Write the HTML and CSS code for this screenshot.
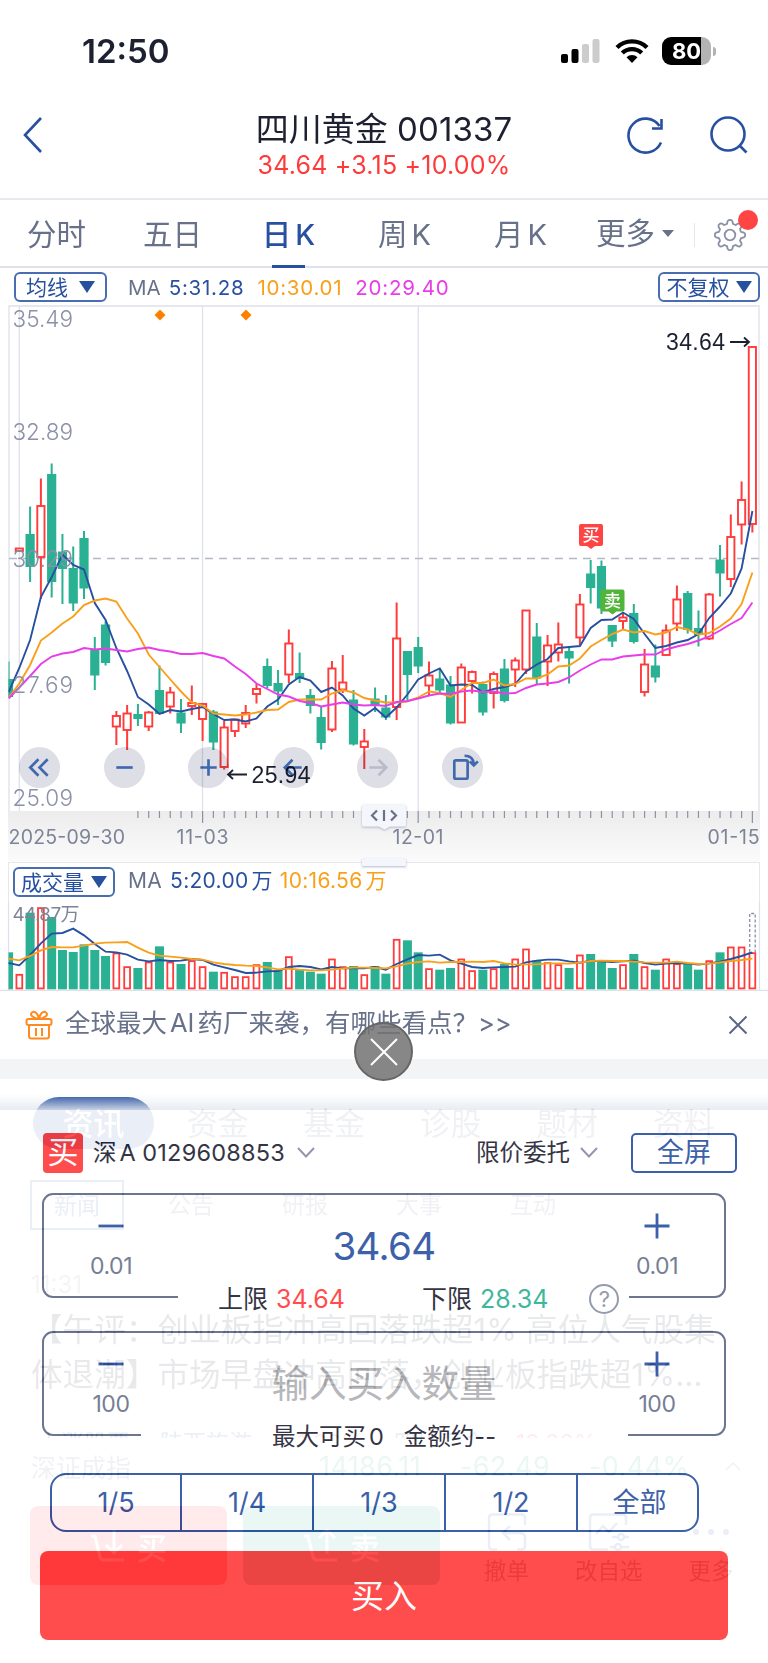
FILE: index.html
```
<!DOCTYPE html>
<html lang="zh-CN">
<head>
    <meta charset="UTF-8">
    <meta name="viewport" content="width=device-width, initial-scale=1.0">
    <title>四川黄金 001337</title>
    <link rel="stylesheet" href="styles.css">
</head>
<body>
<div class="phone">
    <div class="status-bar">
        <span class="clock">12:50</span>
        <svg class="signal" width="39" height="24" viewBox="0 0 39 24">
            <rect x="0" y="15" width="7" height="9" rx="2"/>
            <rect x="10.5" y="10" width="7" height="14" rx="2"/>
            <rect x="21" y="5" width="7" height="19" rx="2" fill="#ccc"/>
            <rect x="31.5" y="0" width="7" height="24" rx="2" fill="#ccc"/>
        </svg>
        <svg class="wifi" width="34" height="24" viewBox="0 0 34 24">
            <path d="M2 8.5a21.5 21.5 0 0 1 30 0M7.3 14a14 14 0 0 1 19.4 0" fill="none" stroke="#000" stroke-width="4.4"/>
            <path d="M17 24l-5.5-5.8a8 8 0 0 1 11 0z"/>
        </svg>
        <div class="battery"><span>80</span></div>
        <i class="battery-tip"></i>
    </div>

    <header class="title-bar">
        <svg class="back" width="22" height="38" viewBox="0 0 22 38"><path d="M19 2L3 19l16 17"/></svg>
        <div class="title">
            <h1>四川黄金 <span>001337</span></h1>
            <p>34.64 +3.15 +10.00%</p>
        </div>
        <svg class="refresh" width="38" height="38" viewBox="0 0 38 38"><path d="M35 26.5A17 17 0 1 1 33.500 10M26 12.500h9.500V3"/></svg>
        <svg class="search" width="40" height="38" viewBox="0 0 40 38"><circle cx="19" cy="18" r="16.500"/><path d="M30 29l7.500 7.500"/></svg>
    </header>

    <nav class="period-tabs">
        <a>分时</a>
        <a>五日</a>
        <a class="active">日<b>K</b></a>
        <a>周<b>K</b></a>
        <a>月<b>K</b></a>
        <a class="more">更多<i></i></a>
        <span class="gear">
            <svg width="34" height="34" viewBox="0 0 34 34">
                <path id="gearPath" d=""/>
                <circle cx="17" cy="17" r="5.300"/>
            </svg>
        </span>
    </nav>

    <div class="indicator">
        <span class="chip">均线<i></i></span>
        <span class="ma gray">MA</span>
        <span class="ma blue ma5">5:31.28</span>
        <span class="ma orange ma10">10:30.01</span>
        <span class="ma pink">20:29.40</span>
        <span class="chip right">不复权<i></i></span>
    </div>

    <section class="kline">
        <svg id="kChart" width="768" height="557" viewBox="0 305 768 557"></svg>
        <div class="controls">
            <span><svg viewBox="0 0 40 40"><path d="M19 12l-8 8 8 8M28 12l-8 8 8 8"/></svg></span>
            <span><svg viewBox="0 0 40 40"><path d="M12 20h16"/></svg></span>
            <span><svg viewBox="0 0 40 40"><path d="M12 20h16M20 12v16"/></svg></span>
            <span><svg viewBox="0 0 40 40"><path d="M28 20H12M19 12.500l-7.500 7.500 7.500 7.500"/></svg></span>
            <span class="off"><svg viewBox="0 0 40 40"><path d="M12 20h16M21 12.500l7.500 7.500-7.500 7.500"/></svg></span>
            <span><svg viewBox="0 0 40 40"><rect x="12" y="13" width="13" height="18" rx="1.500"/><path d="M22 8.500c6 0 9 3 9 9M27 14l4 4 4-4"/></svg></span>
        </div>
    </section>

    <section class="volume">
        <div class="volume-head">
            <span class="chip">成交量<i></i></span>
            <span class="ma gray">MA</span>
            <span class="ma blue">5:20.00<em>万</em></span>
            <span class="ma orange">10:16.56<em>万</em></span>
        </div>
        <svg id="vChart" width="768" height="89" viewBox="0 902 768 89"></svg>
    </section>

    <div class="notice">
        <svg width="28" height="30" viewBox="0 0 28 30">
            <rect x="1.500" y="9" width="25" height="6" rx="2"/>
            <path d="M4 15v11q0 2.500 2.500 2.500h15q2.500 0 2.500-2.500V15M11 18v8M17 18v8M14 9C8 8 4 5 7 2.500S13 4 14 9C15 4 18 0 21 2.500S20 8 14 9"/>
        </svg>
        <span>全球最大<em>AI</em>药厂来袭，有哪些看点？<b>&gt;&gt;</b></span>
        <svg class="dismiss" width="20" height="20" viewBox="0 0 20 20"><path d="M1.500 1.500l17 17M18.500 1.500l-17 17"/></svg>
    </div>

    <div class="news">
        <div class="news-tabs">
            <a class="active">资讯</a><a>资金</a><a>基金</a><a>诊股</a><a>题材</a><a>资料</a>
        </div>
        <div class="sub-tabs">
            <a class="active">新闻</a><a>公告</a><a>研报</a><a>大事</a><a>互动</a>
        </div>
        <time>11:31</time>
        <h2><span>【午评：创业板指冲高回落跌超1% 高位人气股集</span><span>体退潮】市场早盘冲高回落，创业板指跌超1%…</span></h2>
        <div class="related"><span>上涨股票</span><span>陕西旅游</span><span class="up">+1.68%</span><span>四川黄金</span><span class="up">10.00%</span></div>
    </div>

    <div class="index-row">
        <span>深证成指</span><b class="v1">14186.11</b><b class="v2">-62.49</b><b class="v3">-0.44%</b>
        <svg width="16" height="10" viewBox="0 0 16 10"><path d="M1 9l7-7 7 7"/></svg>
    </div>

    <div class="bottom-bar">
        <div class="trade buy">
            <svg width="38" height="34" viewBox="0 0 38 34"><path d="M1 7h4l5 21q1 3 4 3h20M24 1v22M16 16l8 8 8-8"/></svg>买
        </div>
        <div class="trade sell">
            <svg width="38" height="34" viewBox="0 0 38 34"><path d="M1 7h4l5 21q1 3 4 3h20M24 25V2M16 9l8-8 8 8"/></svg>卖
        </div>
        <div class="tool t1">
            <svg width="40" height="38" viewBox="0 0 40 38"><path d="M38 12V5q0-3.500-3.500-3.500h-29Q2 1.500 2 5v28q0 3.500 3.500 3.500H10M30 36.500h4.500Q38 36.500 38 33v-8q0-5-5-5H16M23 13l-7 7 7 7"/></svg>撤单
        </div>
        <div class="tool t2">
            <svg width="42" height="38" viewBox="0 0 42 38"><path d="M38 12V5q0-3.500-3.500-3.500h-29Q2 1.500 2 5v28q0 3.500 3.500 3.500H20M8 21l7-8 6 6 8-9M24 24h6M36 24h5M22 34h5M34 34h7"/><circle cx="33" cy="24" r="3"/><circle cx="30" cy="34" r="3"/></svg>改自选
        </div>
        <div class="tool t3">
            <svg width="40" height="38" viewBox="0 0 40 38"><g class="dots"><circle cx="5" cy="19" r="3"/><circle cx="20" cy="19" r="3"/><circle cx="35" cy="19" r="3"/></g></svg>更多
        </div>
    </div>

    <!-- quick order sheet, lies over the page -->
    <div class="sheet-fade"></div>
    <div class="sheet-close"><svg width="28" height="28" viewBox="0 0 28 28"><path d="M1 1l26 26M27 1L1 27"/></svg></div>
    <div class="sheet">
        <div class="account">
            <span class="side">买</span>
            <span class="acc">深<em>A</em> <b>0129608853</b></span>
            <svg width="18" height="11" viewBox="0 0 18 11"><path d="M1 1l8 8.500L17 1"/></svg>
            <span class="kind">限价委托</span>
            <svg width="18" height="11" viewBox="0 0 18 11"><path d="M1 1l8 8.500L17 1"/></svg>
            <span class="full">全屏</span>
        </div>
        <div class="field price">
            <div class="step"><svg width="26" height="26" viewBox="0 0 26 26"><path d="M.5 13h25"/></svg>0.01</div>
            <div class="value">34.64</div>
            <div class="step"><svg width="26" height="26" viewBox="0 0 26 26"><path d="M.5 13h25M13 .5v25"/></svg>0.01</div>
            <div class="legend">
                <span>上限 <b class="up">34.64</b></span>
                <span class="low">下限 <b class="down">28.34</b></span>
                <i>?</i>
            </div>
        </div>
        <div class="field amount">
            <div class="step"><svg width="26" height="26" viewBox="0 0 26 26"><path d="M.5 13h25"/></svg>100</div>
            <div class="value placeholder">输入买入数量</div>
            <div class="step"><svg width="26" height="26" viewBox="0 0 26 26"><path d="M.5 13h25M13 .5v25"/></svg>100</div>
            <div class="legend"><span>最大可买<b>0</b></span><span class="sum">金额约--</span></div>
        </div>
        <div class="parts"><span>1/5</span><span>1/4</span><span>1/3</span><span>1/2</span><span>全部</span></div>
        <div class="submit">买入</div>
    </div>
</div>
<script src="script.js"></script>
</body>
</html>
```
FILE: styles.css
```
* {
    box-sizing: border-box;
}
body {
    margin: 0;
    background: #fff;
    font-family: Inter, "Noto Sans CJK SC", sans-serif;
    color: #1c2030;
}
h1, h2, p {
    margin: 0;
    font-weight: 400;
}
b, em, i {
    font-weight: inherit;
    font-style: normal;
}
svg {
    display: block;
    flex: none;
}
.phone {
    position: relative;
    width: 768px;
    height: 1663px;
    overflow: hidden;
    white-space: nowrap;
}
.gray { color: #68718a; }
.blue { color: #2850a0; }
.orange { color: #f9a01b; }
.pink { color: #e83de8; }
.up { color: #ff3a3a; }
.down { color: #2ab092; }

/* status bar */
.status-bar {
    display: flex;
    align-items: center;
    height: 102px;
    padding-left: 82px;
}
.clock {
    width: 479px;
    font-size: 33px;
    font-weight: 600;
}
.wifi {
    margin: 0 13px 0 15px;
}
.battery {
    width: 49px;
    height: 28px;
    border-radius: 9px;
    background: linear-gradient(90deg, #000 80%, #b3b3b3 80%);
    color: #fff;
    font-size: 22px;
    font-weight: 700;
    line-height: 28px;
    text-align: center;
}
.battery-tip {
    width: 3px;
    height: 9px;
    margin-left: 2px;
    border-radius: 0 3px 3px 0;
    background: #b3b3b3;
}

/* header */
.title-bar {
    display: flex;
    height: 98px;
    border-bottom: 2px solid #e8e9ee;
}
.title-bar svg {
    margin-top: 14px;
    fill: none;
    stroke: #2850a0;
    stroke-width: 2.6;
}
.title-bar .back {
    margin-left: 22px;
}
.title {
    width: 400px;
    margin-left: 140px;
    text-align: center;
}
.title h1 {
    height: 49px;
    font-size: 33px;
    line-height: 54px;
}
.title h1 span {
    letter-spacing: 0.1px;
}
.title p {
    font-size: 25px;
    line-height: 28px;
    color: #ff3a3a;
    letter-spacing: 0.2px;
}
.title-bar .refresh {
    margin-left: 42px;
}
.title-bar .search {
    margin-left: 45px;
}

/* period tabs */
.period-tabs {
    display: grid;
    grid-template-columns: repeat(5, 116px) 114px 74px;
    height: 68px;
    border-bottom: 2px solid #dfe2ea;
    font-size: 29.500px;
    line-height: 69px;
    color: #68718a;
    text-align: center;
}
.period-tabs a {
    padding-right: 3px;
}
.period-tabs a b {
    margin-left: 4px;
    font-size: 29px;
}
.period-tabs .active {
    position: relative;
    color: #2850a0;
    font-weight: 500;
}
.period-tabs .active::after {
    content: "";
    position: absolute;
    left: 40px;
    bottom: 1px;
    width: 33px;
    height: 3px;
    background: #2850a0;
}
.period-tabs .more {
    display: flex;
    align-items: center;
    padding-left: 16px;
    height: 67px;
}
.more i {
    margin-left: 7px;
    border: 6px solid transparent;
    border-top: 7px solid #68718a;
    border-bottom: 0;
}
.gear {
    position: relative;
    align-self: center;
    height: 24px;
    border-left: 1px solid #e4e6ec;
}
.gear svg {
    margin: -5px 0 0 18px;
    fill: none;
    stroke: #8a91a6;
    stroke-width: 1.8;
}
.gear::after {
    content: "";
    position: absolute;
    left: 43px;
    top: -13px;
    width: 20px;
    height: 20px;
    border-radius: 50%;
    background: #ff4444;
}

/* MA legend */
.indicator {
    display: flex;
    align-items: center;
    height: 37px;
    padding: 1px 8px 0 14px;
}
.chip {
    display: flex;
    align-items: center;
    justify-content: center;
    height: 30px;
    width: 93px;
    padding-bottom: 2px;
    border: 2px solid #4a6cb0;
    border-radius: 6px;
    color: #2850a0;
    font-size: 21px;
}
.chip i {
    margin: 2px 0 0 11px;
    border: 8px solid transparent;
    border-top: 12px solid #2850a0;
    border-bottom: 0;
}
.chip.right {
    width: 102px;
    margin-left: auto;
}
.chip.right i {
    margin-left: 6px;
}
.ma {
    margin-left: 13px;
    font-size: 20.500px;
    letter-spacing: 0.75px;
}
.ma.gray {
    letter-spacing: 0;
}
.indicator .chip + .ma {
    margin-left: 21px;
}
.gray + .blue {
    margin-left: 8px;
}

/* k line */
.kline {
    position: relative;
    height: 557px;
}
.kline > svg {
    overflow: visible;
}
.controls {
    position: absolute;
    left: 19px;
    top: 441.500px;
    display: flex;
    gap: 43.500px;
    mix-blend-mode: multiply;
}
.controls span {
    width: 41px;
    height: 41px;
    border-radius: 50%;
    background: #dddee6;
}
.controls svg {
    fill: none;
    stroke: #4068ae;
    stroke-width: 2.600;
}
.controls .off svg {
    stroke: #b8bcc8;
}
.grid {
    stroke: #dfe0ea;
    stroke-width: 1.300;
}
.axis text, .dates text {
    font-size: 22.500px;
    font-weight: 300;
    fill: #8c90a8;
}
.dates text {
    font-size: 19.500px;
    font-weight: 400;
    fill: #7d8498;
}
.peak {
    font-family: "Liberation Sans", sans-serif;
    font-size: 23px;
    fill: #1c2030;
}
.peak-arrow {
    fill: none;
    stroke: #1c2030;
    stroke-width: 1.800;
}
.tag {
    font-size: 17px;
    font-weight: 500;
    fill: #fff;
    text-anchor: middle;
}

/* volume */
.volume {
    height: 129px;
}
.volume-head {
    display: flex;
    align-items: center;
    height: 40px;
    margin: 0 8px;
    padding: 0 0 2px 4px;
    border: 1px solid #e6e7ee;
    border-width: 1px 1px 0;
}
.volume-head .chip {
    width: 102px;
}
.volume-head .chip i {
    margin-left: 7px;
}
.volume-head .ma {
    height: 30px;
    font-size: 21px;
    line-height: 28px;
    letter-spacing: 0.3px;
}
.volume-head em {
    margin-left: 3px;
}
.volume-head .orange {
    margin-left: 7px;
}
.vol-max {
    font-size: 19px;
    fill: #7d8498;
}

/* notice */
.notice {
    display: flex;
    align-items: center;
    height: 68px;
    padding: 0 20px 0 25px;
    font-size: 25.500px;
    line-height: 34px;
    color: #68718a;
}
.notice svg {
    fill: none;
    stroke: #ff8a1f;
    stroke-width: 2;
}
.notice span {
    margin: -4px 0 0 12px;
}
.notice em {
    margin: 0 3px;
}
.notice .dismiss {
    margin-left: auto;
    stroke: #5a6684;
}

/* news */
.news {
    height: 379px;
    border-top: 20px solid #f3f4f6;
    overflow: hidden;
}
.news-tabs {
    display: grid;
    grid-template-columns: 121px repeat(5, 116.500px);
    height: 101px;
    padding: 18px 0 0 33px;
    font-size: 31px;
    line-height: 53px;
    text-align: center;
    color: #68718a;
}
.news-tabs a + a {
    padding-left: 18px;
    margin-left: -7px;
}
.news-tabs .active {
    height: 52px;
    border-radius: 26px;
    background: #2850a0;
    color: #fff;
    font-weight: 500;
}
.sub-tabs {
    display: flex;
    gap: 20px;
    padding-left: 30px;
    font-size: 23px;
    line-height: 50px;
    text-align: center;
    color: #68718a;
}
.sub-tabs a {
    width: 94px;
    height: 50px;
    background: #f8f8fa;
}
.sub-tabs .active {
    border: 2px solid #2850a0;
    background: none;
    color: #2850a0;
    line-height: 48px;
}
.news time {
    display: block;
    margin: 39px 0 0 31px;
    height: 38px;
    font-size: 24px;
    line-height: 32px;
    color: #8c90a8;
}
.news h2 {
    margin-left: 31px;
    font-size: 31.600px;
    line-height: 45px;
}
.news h2 span {
    display: block;
    width: 700px;
}
.related {
    display: flex;
    gap: 30px;
    padding: 29px 0 0 38px;
    font-size: 23px;
    line-height: 34px;
    color: #2850a0;
}
.index-row {
    display: flex;
    align-items: center;
    height: 58px;
    padding: 0 27px 2px 31px;
    font-size: 25px;
    color: #68718a;
}
.index-row b {
    color: #2ab092;
    font-size: 27px;
    letter-spacing: 0.4px;
}
.index-row svg {
    margin-left: auto;
    fill: none;
    stroke: #68718a;
    stroke-width: 1.500;
}
.v1 { margin-left: 188px; }
.v2 { margin-left: 39px; }
.v3 { margin-left: 39px; }

.bottom-bar {
    display: flex;
    padding: 10px 0 0 30px;
}
.trade {
    display: flex;
    align-items: center;
    justify-content: center;
    gap: 9px;
    width: 197px;
    height: 79px;
    margin-right: 16px;
    border-radius: 8px;
    background: #ff3a3a;
    color: #fff;
    font-size: 30px;
    font-weight: 500;
}
.trade.sell {
    background: #2ab092;
}
.bottom-bar svg {
    fill: none;
    stroke: #fff;
    stroke-width: 3;
}
.tool {
    display: flex;
    flex-direction: column;
    align-items: center;
    gap: 2px;
    padding-top: 7px;
    font-size: 22.500px;
    color: #3c4256;
}
.bottom-bar .tool svg {
    stroke: #2850a0;
    stroke-width: 2.500;
}
.bottom-bar .dots {
    fill: #2850a0;
    stroke: none;
}
.t1 { margin-left: 28px; }
.t2 { margin-left: 46px; }
.t3 { margin-left: 46px; }

/* order sheet */
.sheet-fade {
    position: absolute;
    left: 0;
    top: 1094px;
    width: 768px;
    height: 16px;
    background: linear-gradient(rgba(232, 236, 242, 0), rgba(228, 232, 239, .85));
}
.sheet-close {
    position: absolute;
    left: 354px;
    top: 1022px;
    z-index: 2;
    width: 59px;
    height: 59px;
    padding: 14px;
    border: 2px solid #666;
    border-radius: 50%;
    background: rgba(115, 115, 115, .86);
}
.sheet-close svg {
    fill: none;
    stroke: #fff;
    stroke-width: 2;
}
.sheet {
    position: absolute;
    left: 0;
    top: 1110px;
    width: 768px;
    height: 553px;
    padding: 22px 40px 0;
    background: #fff;
    opacity: .9;
}
.account {
    display: flex;
    align-items: center;
    height: 41px;
    padding-left: 3px;
    font-size: 23.500px;
}
.account svg {
    margin-top: -1px;
    fill: none;
    stroke: #8a8aa8;
    stroke-width: 2;
}
.account em {
    margin-left: 3px;
}
.account b {
    letter-spacing: 0.2px;
}
.side {
    width: 40px;
    height: 40px;
    margin-right: 10px;
    border-radius: 4px;
    background: #ff3a3a;
    color: #fff;
    font-size: 31px;
    line-height: 38px;
    text-align: center;
}
.acc {
    width: 204px;
    padding-bottom: 3px;
}
.kind {
    width: 104px;
    margin-left: 161px;
    padding-bottom: 3px;
}
.full {
    width: 106px;
    height: 40px;
    margin-left: auto;
    margin-right: -9px;
    border: 2px solid #2850a0;
    border-radius: 5px;
    color: #2850a0;
    font-size: 27px;
    line-height: 35px;
    text-align: center;
}
.field {
    position: relative;
    display: flex;
    justify-content: space-between;
    width: 684px;
    height: 105px;
    margin: 20px 0 0 2px;
    border: 2px solid #5e6884;
    border-radius: 11px;
}
.field.amount {
    margin-top: 33px;
}
.step {
    display: flex;
    flex-direction: column;
    align-items: center;
    gap: 12px;
    width: 134px;
    padding-top: 18px;
    color: #68718a;
    font-size: 23px;
    line-height: 30px;
    letter-spacing: -0.4px;
}
.step svg {
    fill: none;
    stroke: #2850a0;
    stroke-width: 2.800;
}
.value {
    font-size: 38.500px;
    line-height: 102px;
    color: #2850a0;
    letter-spacing: -0.6px;
}
.placeholder {
    font-size: 37.500px;
    letter-spacing: 0;
    color: #b0b0b4;
}
.legend {
    position: absolute;
    left: 134px;
    bottom: -18px;
    display: flex;
    width: 451px;
    height: 30px;
    padding-left: 40px;
    background: #fff;
    font-size: 25px;
    line-height: 30px;
}
.legend b {
    margin-left: 1px;
}
.legend .low {
    margin-left: 77px;
}
.legend i {
    width: 30px;
    height: 30px;
    margin-left: 41px;
    border: 2px solid #8a91a6;
    border-radius: 50%;
    color: #8a91a6;
    font-size: 22px;
    line-height: 27px;
    text-align: center;
}
.amount .legend {
    left: 97px;
    width: 487px;
    padding-left: 131px;
    font-size: 23.500px;
}
.amount .legend b {
    margin-left: 3px;
}
.legend .sum {
    margin-left: 20px;
}
.parts {
    display: grid;
    grid-template-columns: 128px repeat(3, 132px) 1fr;
    width: 649px;
    height: 59px;
    margin: 37px 0 0 10px;
    border: 2px solid #2850a0;
    border-radius: 16px;
    color: #2850a0;
    font-size: 27px;
    line-height: 56px;
    text-align: center;
}
.parts span + span {
    border-left: 2px solid #2850a0;
}
.parts span:last-child {
    padding-left: 4px;
}
.submit {
    height: 89px;
    margin-top: 19px;
    border-radius: 8px;
    background: #ff3a3a;
    color: #fff;
    font-size: 33px;
    line-height: 90px;
    text-align: center;
}
```
FILE: script.js
```
// [up/down, high, body top, body bottom, low, volume top]
const candles = [
    ['g', 661.5, 679, 697, 698, 487], ['r', 548, 548.5, 551, 551.5, 552], ['g', 506.5, 534, 567, 582, 368],
    ['r', 478.5, 506, 557, 599, 352], ['g', 463.5, 474, 582, 597.5, 381], ['g', 534, 551.5, 569, 604, 480],
    ['g', 546.5, 568, 603.5, 611, 486], ['g', 531, 538, 588.5, 599, 463], ['g', 637, 650, 675.5, 690, 480],
    ['g', 621, 624.5, 663, 665.5, 498], ['r', 711, 716, 726.5, 745, 488], ['r', 705, 713.5, 730, 750, 529],
    ['g', 704, 714, 719, 726, 534], ['r', 711, 712.5, 726.5, 731, 515], ['g', 665.5, 690, 714, 714, 469],
    ['r', 687, 692.5, 706.5, 713.5, 515], ['g', 699, 712.5, 723.5, 733, 522], ['r', 685.5, 703, 706, 715, 511],
    ['r', 703, 704, 719, 741, 529], ['g', 710, 711.5, 742.5, 750, 545], ['r', 721, 727.5, 767, 769.5, 546],
    ['r', 719, 719.5, 731, 737, 559], ['r', 705, 713, 723.5, 728, 559], ['r', 684, 689, 694, 703.5, 523],
    ['g', 658.5, 666, 686, 688, 516], ['g', 670, 683, 691.5, 705, 541], ['r', 629.5, 643.5, 674.5, 683, 499],
    ['g', 652.5, 673, 679, 683, 540], ['g', 689, 695, 706, 713.5, 545], ['g', 706, 717, 743, 749.5, 551],
    ['r', 661, 668.5, 729.5, 732, 506], ['r', 655, 682.5, 689.5, 693, 529], ['g', 690, 699.5, 744.5, 745.5, 528],
    ['r', 729, 741.5, 747, 769, 553], ['g', 687.5, 698.5, 705.5, 712, 528], ['g', 695, 707.5, 717.5, 720, 551],
    ['r', 602.5, 638.5, 707, 720, 447], ['g', 651, 651, 675, 700, 451], ['g', 637, 647, 666.5, 673, 487],
    ['r', 661.5, 675.5, 685.5, 695, 535], ['g', 669, 678.5, 690.5, 693.5, 539], ['g', 676, 684.5, 723.5, 724.5, 534],
    ['r', 663.5, 667.5, 722.5, 723, 506], ['r', 670.5, 672, 681, 693.5, 541], ['g', 681.5, 684, 712.5, 715.5, 539],
    ['r', 671.5, 674, 693, 708.5, 535], ['g', 659, 668.5, 701, 702.5, 522], ['r', 657.5, 660.5, 669.5, 687, 506],
    ['r', 610, 610.5, 669.5, 674, 476], ['g', 623, 636.5, 678.5, 684, 512], ['r', 635, 645.5, 661.5, 686, 517],
    ['r', 622.5, 644.5, 652.5, 661.5, 523], ['g', 647, 651, 658.5, 683.5, 534], ['r', 594, 604.5, 637.5, 645, 494],
    ['g', 560, 573.5, 588, 603.5, 492], ['g', 560.5, 566, 608.5, 614, 516], ['g', 625, 625, 641.5, 647, 534],
    ['r', 613, 617.5, 621, 629, 523], ['g', 604, 613, 642, 643.5, 492], ['r', 649, 664.5, 692, 696.5, 529],
    ['g', 644.5, 665.5, 677.5, 682.5, 539], ['r', 624.5, 630.5, 655, 655.5, 506], ['r', 585.5, 599.5, 623.5, 631, 520],
    ['g', 591, 593, 630, 633.5, 522], ['g', 610.5, 628, 635, 646.5, 539], ['r', 593, 594.5, 638.5, 640, 511],
    ['g', 545, 559.5, 573.5, 596.5, 487], ['r', 514.5, 537, 579, 587, 470], ['r', 481.5, 500, 524.5, 544.5, 470],
    ['r', 346, 347, 524, 532.5, 487]
];
const ma5 = [692, 668, 640, 597, 577, 554.5, 565, 569.5, 603, 620, 648, 671, 697, 704.5, 714, 710, 711.5, 709, 707, 714, 720, 719.5, 721.5, 718.5, 706.5, 699.5, 684.5, 677, 680.5, 692, 687.5, 695.5, 708.5, 715.5, 708, 717.5, 707.5, 694.5, 679.5, 673.5, 668.5, 685.5, 684.5, 685, 692.5, 689, 687, 684, 671.5, 664.5, 659, 648, 647, 646, 628, 620, 619.5, 612.5, 619, 634, 648, 646, 642.5, 640, 634, 618, 606.5, 593.5, 568.5, 511];
const ma10 = [698, 683.5, 665, 640.5, 632.5, 623.5, 616.5, 605, 600.5, 598.5, 601.5, 618.5, 633.5, 654.5, 667, 679.5, 691.5, 702.5, 705.5, 713.5, 714.5, 715.5, 714.5, 712.5, 710, 709.5, 702, 699.5, 699.5, 699.5, 693.5, 690, 692.5, 698, 700.5, 702.5, 702.5, 701.5, 697.5, 691.5, 693, 697, 690, 683, 683, 679.5, 685.5, 684, 678.5, 678.5, 674.5, 666.5, 665.5, 658.5, 646.5, 640, 634, 629.5, 632.5, 631, 634.5, 632.5, 627, 629.5, 634.5, 633, 626.5, 618.5, 604, 572.5];
const ma20 = [698.5, 687.5, 676, 664, 656.5, 653.5, 652, 648, 649.5, 648.5, 650, 651.5, 649, 647.5, 650, 651.5, 654, 654, 653, 656, 658.5, 666.5, 674, 683.5, 689, 694.5, 696.5, 701, 703, 706.5, 704.5, 702.5, 704.5, 705.5, 705, 706, 702, 701, 698.5, 695.5, 693.5, 694, 691.5, 690.5, 692, 691.5, 693.5, 693, 688, 684.5, 683.5, 682, 677.5, 670.5, 664.5, 659.5, 659.5, 656.5, 655.5, 654.5, 654.5, 649.5, 646.5, 644, 640.5, 636.5, 630.5, 624, 618, 602.5];
const vol5 = [519, 526, 495, 460, 431, 429, 416, 436, 462, 485, 487, 494, 509, 514, 510, 513, 512, 507, 510, 524, 532, 540, 549, 548, 544, 543, 531, 528, 531, 538, 531, 535, 534, 535, 531, 539, 522, 508, 495, 497, 494, 511, 521, 531, 534, 532, 531, 530, 517, 512, 509, 509, 514, 518, 512, 514, 516, 514, 512, 519, 524, 521, 519, 521, 524, 520, 515, 507, 498, 487];
const vol10 = [506, 511, 498, 481, 471, 472, 472, 467, 461, 458, 457, 456, 473, 488, 497, 500, 503, 507, 509, 517, 522, 525, 527, 528, 532, 538, 536, 539, 541, 541, 539, 535, 533, 533, 534, 535, 529, 521, 516, 514, 518, 516, 516, 515, 516, 513, 520, 524, 523, 523, 520, 520, 521, 518, 513, 512, 513, 513, 515, 517, 518, 518, 515, 519, 522, 521, 517, 513, 510, 506];

const RED = '#ff3b3b', GREEN = '#2ab092', BLUE = '#2850a0', ORANGE = '#f9a01b', PINK = '#e83de8';
const X = i => 8.55 + 10.78 * i;
const V = v => 790 + v / 3;

function line(points, color) {
    return `<polyline points="${points.map((y, i) => X(i).toFixed(1) + ',' + y).join(' ')}" fill="none" stroke="${color}" stroke-width="1.9"/>`;
}

function drawK() {
    let s = '<defs><linearGradient id="ax" x2="0" y2="1"><stop stop-color="#ececec"/><stop offset="1" stop-color="#fbfbfb"/></linearGradient>' +
        '<clipPath id="plot"><rect x="8.5" y="305" width="751" height="506"/></clipPath>' +
        '<filter id="sh" x="-20%" y="-30%" width="140%" height="180%"><feDropShadow dx="0" dy="1" stdDeviation="1.2" flood-color="#8088a8" flood-opacity=".6"/></filter></defs>';
    s += '<rect x="8" y="811" width="752" height="51" fill="url(#ax)"/>';
    s += '<path class="grid" fill="none" d="M9 811V306H759V811M19.300 306V811M202.500 306V811M418.300 306V811"/>';
    s += '<path d="M9 558.500H759" stroke="#b4b9c8" stroke-width="1.500" stroke-dasharray="8 6"/>';
    s += '<path d="M160 309.500l5.500 5.500-5.500 5.500-5.500-5.500zM246 309.500l5.500 5.500-5.500 5.500-5.500-5.500z" fill="#ff8000"/>';

    s += '<g clip-path="url(#plot)">';
    candles.forEach(([c, hi, top, bot, lo], i) => {
        const x = X(i);
        if (c === 'g') {
            s += `<path d="M${x} ${hi}V${lo}" stroke="${GREEN}" stroke-width="2"/><rect x="${x - 4.6}" y="${top}" width="9.2" height="${bot - top}" fill="${GREEN}"/>`;
        } else {
            s += `<path d="M${x} ${hi}V${top}M${x} ${bot}V${lo}" stroke="${RED}" stroke-width="2"/><rect x="${x - 3.6}" y="${top}" width="7.2" height="${bot - top}" fill="#fff" stroke="${RED}" stroke-width="1.9"/>`;
        }
    });
    s += line(ma5, BLUE) + line(ma10, ORANGE) + line(ma20, PINK) + '</g>';

    s += '<g class="axis">';
    [['35.49', 327], ['32.89', 439.5], ['30.29', 566.5], ['27.69', 693], ['25.09', 805.5]].forEach(([t, y]) => {
        s += `<text x="12.500" y="${y}" textLength="60.500">${t}</text>`;
    });
    s += '</g><g class="dates">';
    [['2025-09-30', 8.5, 116.5], ['11-03', 176.5, 52], ['12-01', 392.5, 51], ['01-15', 707.5, 52]].forEach(([t, x, w]) => {
        s += `<text x="${x}" y="843.500" textLength="${w}">${t}</text>`;
    });
    s += '</g>';
    for (let i = 12; i < 70; i++) {
        const long = i === 18 || i === 38 || i === 69;
        s += `<path d="M${X(i)} 811V${long ? 823 : 818}" stroke="#8a91a6" stroke-width="1.2"/>`;
    }

    s += '<text class="peak" x="666" y="350" textLength="59">34.64</text><path class="peak-arrow" d="M730 342h19M744 337.500l5 4.500-5 4.500"/>';
    s += '<text class="peak" x="251.500" y="783" textLength="59">25.94</text><path class="peak-arrow" d="M247 774.500h-19M233 770l-5 4.500 5 4.500"/>';
    s += `<path d="M581 524h20a2 2 0 0 1 2 2v18a2 2 0 0 1-2 2h-6l-4 3-4-3h-6a2 2 0 0 1-2-2v-18a2 2 0 0 1 2-2z" fill="#ff4444"/><text class="tag" x="591" y="541">买</text>`;
    s += `<path d="M602.500 589.500h20a2 2 0 0 1 2 2v18a2 2 0 0 1-2 2h-6l-4 3-4-3h-6a2 2 0 0 1-2-2v-18a2 2 0 0 1 2-2z" fill="#52b43a"/><text class="tag" x="612.500" y="606.500">卖</text>`;

    // drag handles
    s += '<g filter="url(#sh)"><path d="M364 804.500h40q2 0 2 2v18q0 2-2 2h-14l-5.500 3-5.500-3h-15q-2 0-2-2v-18q0-2 2-2z" fill="#f4f6fc"/>';
    s += '<path d="M362 866v-5q0-3 3-3h38q3 0 3 3v5z" fill="#f4f6fc"/></g>';
    s += '<path d="M377 810.500l-5 5 5 5M391 810.500l5 5-5 5M384 810v11" fill="none" stroke="#68718a" stroke-width="2.200"/>';
    document.getElementById('kChart').innerHTML = s;
}

function drawVolume() {
    let s = '<path class="grid" fill="none" d="M8.500 902V990.500M759.500 902V990.500M0 990.500H768"/><g>';
    candles.forEach((c, i) => {
        const x = X(i), y = V(c[5]), left = i ? x - 4.5 : 8.5;
        if (c[0] === 'g') {
            s += `<rect x="${left}" y="${y}" width="${x + 4.5 - left}" height="${989.3 - y}" fill="${GREEN}"/>`;
        } else {
            s += `<rect x="${x - 2.9}" y="${y + .8}" width="5.800" height="${988.4 - y - .8}" fill="#fff" stroke="${RED}" stroke-width="1.800"/>`;
        }
    });
    s += '</g><path d="M749.700 952V913.500h5.500V952" fill="none" stroke="#8a91a6" stroke-width="1.300" stroke-dasharray="3 2"/>';
    s += line(vol5.map(V), BLUE) + line(vol10.map(V), ORANGE);
    s += '<text class="vol-max" x="12.500" y="921" textLength="67">44.87万</text>';
    document.getElementById('vChart').innerHTML = s;
}

function drawGear() {
    let d = '';
    for (let a = 0; a <= 360; a += 5) {
        const r = 13.2 + 1.9 * Math.tanh(2.5 * Math.cos(a * 8 * Math.PI / 180));
        const t = a * Math.PI / 180;
        d += (a ? 'L' : 'M') + (17 + r * Math.sin(t)).toFixed(1) + ' ' + (17 - r * Math.cos(t)).toFixed(1);
    }
    document.getElementById('gearPath').setAttribute('d', d + 'z');
}

drawK();
drawVolume();
drawGear();
```
